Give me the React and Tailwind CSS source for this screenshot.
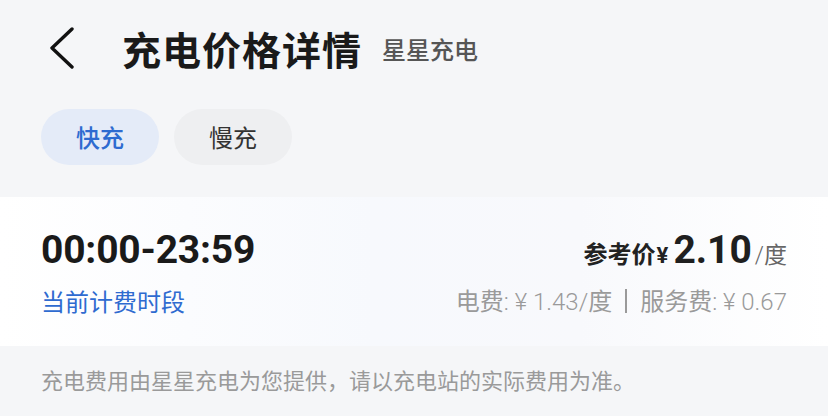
export default function App() {
  const cjk = { fontFamily: '"Noto Sans CJK SC", "Noto Sans", sans-serif' };
  const num = { fontFamily: 'Roboto, "Noto Sans CJK SC", sans-serif' };
  return (
    <div className="w-[828px] h-[416px] bg-[#f5f6f8] overflow-hidden" style={cjk}>
      <div className="h-[96px] flex items-center">
        <div className="w-[122px] h-full flex items-center pl-[48px]">
          <svg width="28" height="42" viewBox="0 0 28 42" fill="none">
            <path d="M24 2 L4 21 L24 40" stroke="#111" strokeWidth="3.4" strokeLinecap="round" strokeLinejoin="round" />
          </svg>
        </div>
        <div className="text-[39px] leading-[40px] font-bold text-[#1a1a1a] tracking-[1px]">充电价格详情</div>
        <div className="ml-[20px] mt-[2px] text-[24px] leading-[24px] font-medium text-[#555]">星星充电</div>
      </div>
      <div className="flex gap-[15px] pl-[41px] mt-[13px]">
        <div className="w-[118px] h-[56px] rounded-full bg-[#e4ebf8] flex items-center justify-center text-[24px] font-medium text-[#2e6bd0]">快充</div>
        <div className="w-[118px] h-[56px] rounded-full bg-[#eeeff1] flex items-center justify-center text-[24px] text-[#333]">慢充</div>
      </div>
      <div className="mt-[32px] h-[149px] bg-[linear-gradient(90deg,#ffffff_0%,#f7f9fd_45%,#f8f9fc_70%,#ffffff_100%)] px-[41px] pt-[33px]">
        <div className="flex items-baseline justify-between h-[40px]">
          <div className="text-[39px] leading-[40px] font-bold text-[#1a1a1a] tracking-[-0.2px]" style={num}>00:00-23:59</div>
          <div className="flex items-baseline text-[#222]">
            <span className="text-[24px] font-bold" style={cjk}>参考价</span>
            <span className="text-[22px] font-bold ml-[1px] mr-[5px]" style={num}>¥</span>
            <span className="text-[39px] leading-[40px] font-bold text-[#1f1f1f]" style={num}>2.10</span>
            <span className="text-[23px] text-[#666] ml-[3px]" style={num}><span className="font-light">/</span>度</span>
          </div>
        </div>
        <div className="flex items-center justify-between mt-[19px] h-[24px]">
          <div className="text-[24px] leading-[24px] text-[#2f6bd0]">当前计费时段</div>
          <div className="flex items-center text-[24px] leading-[24px] text-[#9a9a9a]">
            <span>电费<span className="font-light" style={num}>: ¥ 1.43/</span>度</span>
            <span className="w-[2px] h-[24px] bg-[#9a9a9a] mx-[13px]"></span>
            <span>服务费<span className="font-light" style={num}>: ¥ 0.67</span></span>
          </div>
        </div>
      </div>
      <div className="px-[41px] pt-[22px] text-[22px] leading-[22px] text-[#9a9a9a]">充电费用由星星充电为您提供，请以充电站的实际费用为准。</div>
    </div>
  );
}
